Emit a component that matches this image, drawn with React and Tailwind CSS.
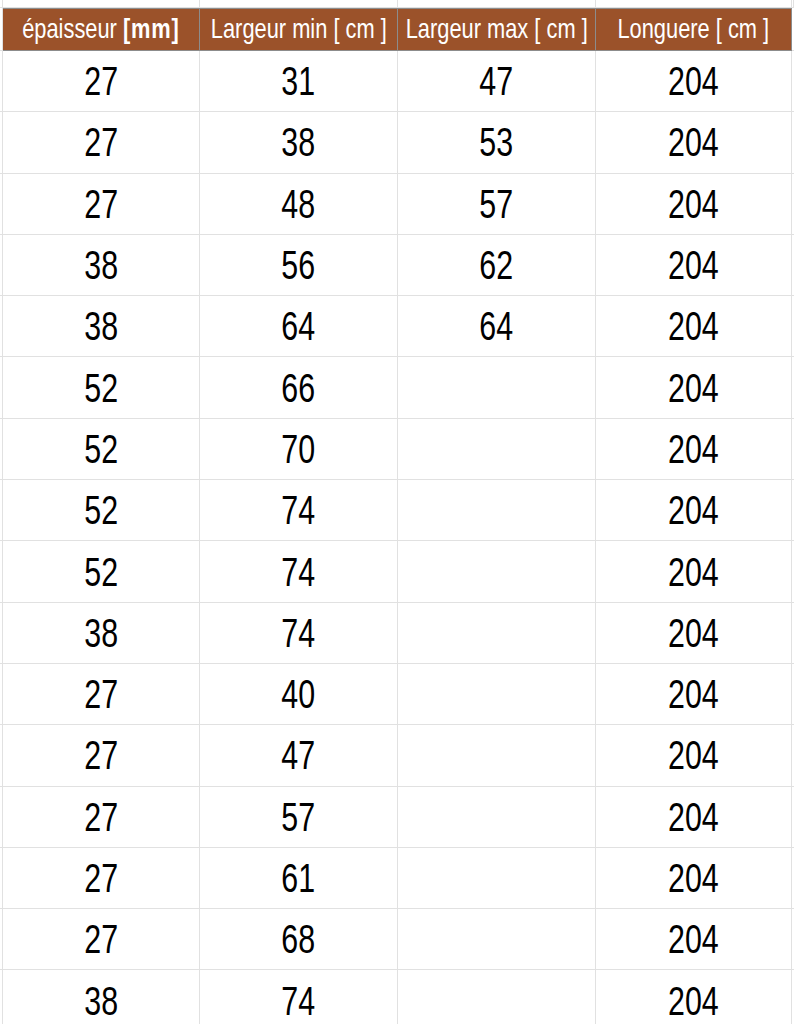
const ROWS = [
  ['27', '31', '47', '204'],
  ['27', '38', '53', '204'],
  ['27', '48', '57', '204'],
  ['38', '56', '62', '204'],
  ['38', '64', '64', '204'],
  ['52', '66', '', '204'],
  ['52', '70', '', '204'],
  ['52', '74', '', '204'],
  ['52', '74', '', '204'],
  ['38', '74', '', '204'],
  ['27', '40', '', '204'],
  ['27', '47', '', '204'],
  ['27', '57', '', '204'],
  ['27', '61', '', '204'],
  ['27', '68', '', '204'],
  ['38', '74', '', '204'],
];

const line = 'border-r border-b border-[#e1e1e1]';

function HeadCell({ children }) {
  return (
    <div className="bg-[#9b522a] border-y border-r border-[#8c8c8c] flex items-center justify-center text-white text-[28px] leading-none whitespace-nowrap overflow-hidden">
      <span className="inline-block scale-x-[0.78] pb-[2px]">{children}</span>
    </div>
  );
}

export default function App() {
  return (
    <div
      className="w-[794px] h-[1024px] overflow-hidden bg-white"
      style={{ fontFamily: '"Liberation Sans Narrow", "Liberation Sans", sans-serif' }}
    >
      <div className="grid grid-cols-[3px_197px_198px_198px_196px_2px] grid-rows-[8px_43px] auto-rows-[61.3px]">
        {/* partial row above header */}
        {Array.from({ length: 6 }).map((_, i) => (
          <div key={'t' + i} className={line} />
        ))}

        {/* header */}
        <div className={line} />
        <HeadCell>
          épaisseur <b className="font-bold tracking-[1px]">[mm]</b>
        </HeadCell>
        <HeadCell>Largeur min [ cm ]</HeadCell>
        <HeadCell>Largeur max [ cm ]</HeadCell>
        <HeadCell>Longuere [ cm ]</HeadCell>
        <div className="border-b border-[#e1e1e1]" />

        {/* data rows */}
        {ROWS.map((r, i) => (
          <Row key={i} cells={r} />
        ))}
      </div>
    </div>
  );
}

function Row({ cells }) {
  return (
    <>
      <div className={line} />
      {cells.map((c, j) => (
        <div key={j} className={`${line} flex items-center justify-center text-black`}>
          <span className="inline-block text-[40px] leading-none scale-x-[0.76]">{c}</span>
        </div>
      ))}
      <div className="border-b border-[#e1e1e1]" />
    </>
  );
}
